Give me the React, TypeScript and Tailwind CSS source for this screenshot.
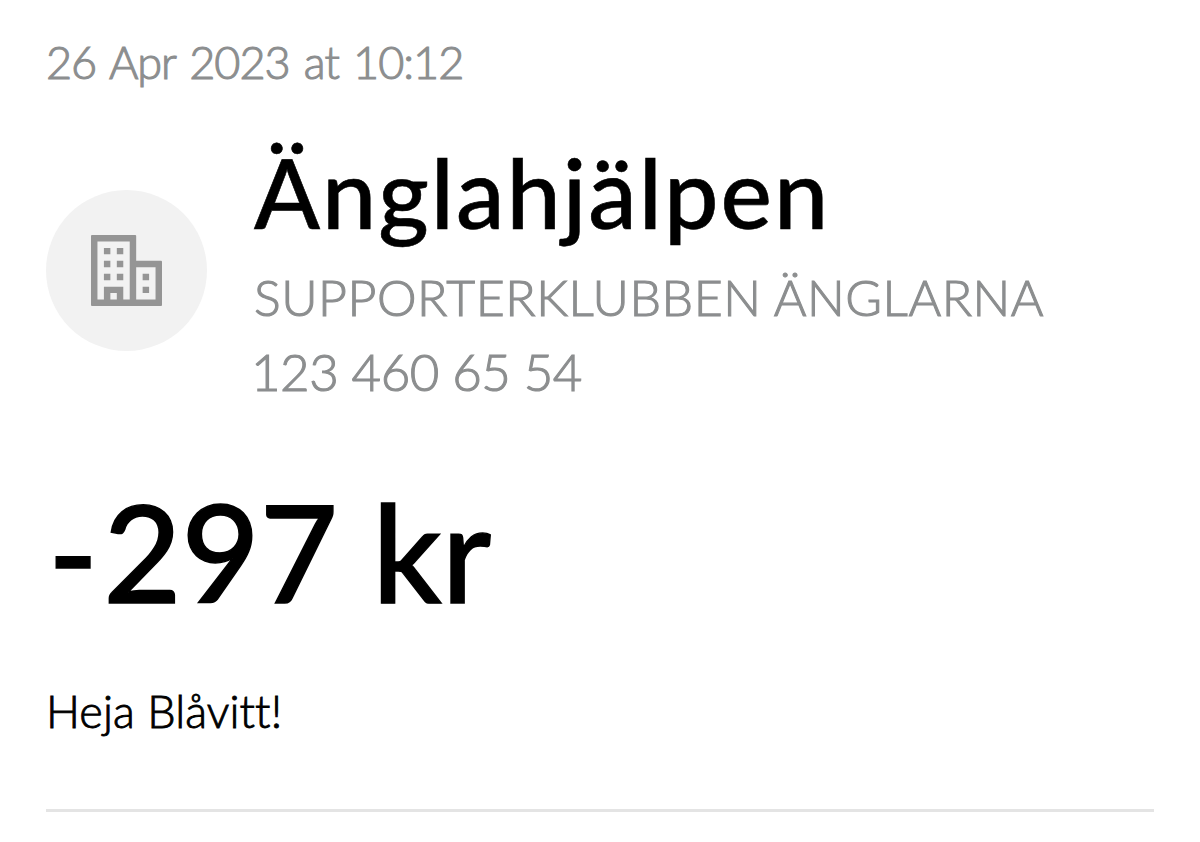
interface IPayment {
  date: string
  name: string
  owner: string
  number: string
  amount: string
  message: string
}

const payment: IPayment = {
  date: '26 Apr 2023 at 10:12',
  name: 'Änglahjälpen',
  owner: 'SUPPORTERKLUBBEN ÄNGLARNA',
  number: '123 460 65 54',
  amount: '-297 kr',
  message: 'Heja Blåvitt!',
}

const BuildingIcon = () => (
  <svg width="71" height="71" viewBox="0 0 11 11" fill="#959595">
    <path
      fillRule="evenodd"
      d="M.1 0H6.9L7 .1V4H10.9L11 4.1V10.9L10.9 11H.1L0 10.9V.1z M1 1V10H2V8H5V10H6V1z M7 5V10H10V5z M3 9V10H4V9z"
    />
    <path d="M2 2h1v1H2z M4 2h1v1H4z M2 4h1v1H2z M4 4h1v1H4z M2 6h1v1H2z M4 6h1v1H4z M8 6h1v1H8z M8 8h1v1H8z" />
  </svg>
)

function PaymentHeader({ name, owner, number }: Pick<IPayment, 'name' | 'owner' | 'number'>) {
  return (
    <div className="flex items-start mt-[30px]">
      <div className="flex items-center justify-center shrink-0 w-[161px] h-[161px] mt-[68px] rounded-full bg-[#f2f2f2]">
        <BuildingIcon />
      </div>
      <div className="ml-[47px] whitespace-nowrap">
        <h1 className="h-[138px] text-[97px] leading-[140px] tracking-[2px] font-medium text-black [-webkit-text-stroke:0.6px]">
          {name}
        </h1>
        <p className="h-[74px] text-[50px] leading-[74px] tracking-[0.5px] font-light [-webkit-text-stroke:1.1px]">{owner}</p>
        <p className="h-[74px] -ml-[3px] pt-px text-[51px] leading-[74px] tracking-[-0.5px] font-light [-webkit-text-stroke:1.1px]">{number}</p>
      </div>
    </div>
  )
}

function App() {
  return (
    <div className="h-[842px] overflow-hidden bg-white px-[46px] pt-8 font-[Lato,sans-serif] text-[#8c8e8f] [font-variant-ligatures:none]">
      <p className="h-[60px] text-[45px] leading-[60px] tracking-[-1px] [word-spacing:3px] font-light whitespace-nowrap [-webkit-text-stroke:1.1px]">
        {payment.date}
      </p>
      <PaymentHeader name={payment.name} owner={payment.owner} number={payment.number} />
      <p className="mt-[68px] ml-[2px] h-[150px] text-[135px] leading-[150px] font-medium text-black whitespace-nowrap [-webkit-text-stroke:1.4px]">
        {/* the minus sign sits a little apart from the digits */}
        <span className="tracking-[5px]">{payment.amount.slice(0, 1)}</span>
        {payment.amount.slice(1)}
      </p>
      <p className="mt-[55px] h-[60px] text-[45px] leading-[60px] tracking-[0.1px] font-light text-black [-webkit-text-stroke:0.9px]">
        {payment.message}
      </p>
      <div className="mt-[68px] h-[3px] bg-[#e4e4e4]"></div>
    </div>
  )
}

export default App
